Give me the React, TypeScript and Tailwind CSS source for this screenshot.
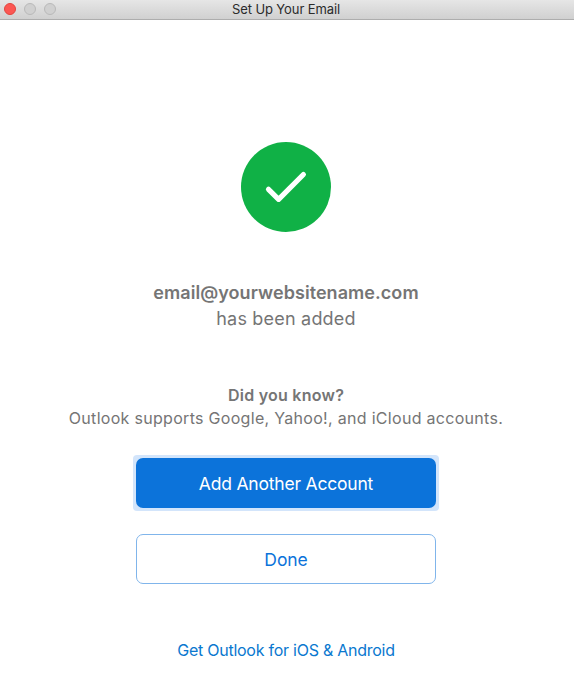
export default function App() {
  return (
    <div className="flex h-[687px] w-[574px] flex-col overflow-hidden bg-white font-[Inter,sans-serif] text-[#757575]">
      <header className="relative flex h-[20px] shrink-0 items-center justify-center border-b border-[#adadad] bg-linear-to-b from-[#e6e6e6] to-[#d0d0d0]">
        <div className="absolute left-[4px] top-[3px] flex gap-[8px]">
          <span className="size-[12px] rounded-full border border-[#e2453e] bg-[#fc5753]" />
          <span className="size-[12px] rounded-full border border-[#b9b9b9] bg-[#d0d0d0]" />
          <span className="size-[12px] rounded-full border border-[#b9b9b9] bg-[#d0d0d0]" />
        </div>
        <h1 className="pr-[2px] pb-[2px] text-[13px] leading-[18px] tracking-[-0.1px] whitespace-nowrap text-[#2b2b2b]">Set Up Your Email</h1>
      </header>
      <main className="flex w-[572px] flex-col items-center pt-[122px]">
        <svg className="size-[90px] shrink-0" viewBox="0 0 90 90" fill="none">
          <circle cx="45" cy="45" r="45" fill="#10b146" />
          <path d="M27.5 47.3L37.6 57.3L62.4 32.5" stroke="white" strokeWidth="5.2" strokeLinecap="round" strokeLinejoin="round" />
        </svg>
        <p className="mt-[48px] text-[18px] leading-[26px] font-semibold tracking-[0.06px] whitespace-nowrap">email@yourwebsitename.com</p>
        <p className="text-[18px] leading-[26px] tracking-[0.2px] whitespace-nowrap">has been added</p>
        <p className="mt-[52px] text-[16px] leading-[23px] font-semibold tracking-[0.25px] whitespace-nowrap">Did you know?</p>
        <p className="text-[16px] leading-[23px] tracking-[0.3px] whitespace-nowrap">Outlook supports Google, Yahoo!, and iCloud accounts.</p>
        <div className="mt-[25px] rounded-[4px] bg-[#d3e5fb] p-[3px]">
          <button className="block h-[50px] w-[300px] rounded-[7px] bg-[#0c73da] pt-[2px] text-[17.5px] tracking-[-0.2px] whitespace-nowrap text-white">Add Another Account</button>
        </div>
        <button className="mt-[23px] h-[50px] w-[300px] rounded-[7px] border border-[#80b5eb] pt-[2px] text-[17.5px] tracking-[-0.1px] whitespace-nowrap text-[#0c73da]">Done</button>
        <a className="mt-[54px] text-[16px] leading-[24px] tracking-[-0.25px] whitespace-nowrap text-[#0a78cf]">Get Outlook for iOS &amp; Android</a>
      </main>
    </div>
  );
}
